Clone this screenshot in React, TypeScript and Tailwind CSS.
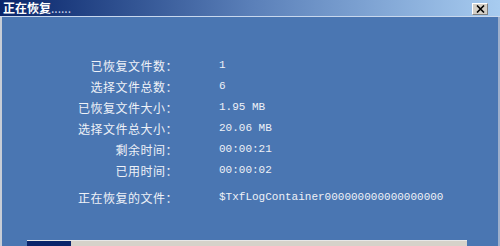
const rows: [string, string][] = [
  ['已恢复文件数：', '1'],
  ['选择文件总数：', '6'],
  ['已恢复文件大小：', '1.95 MB'],
  ['选择文件总大小：', '20.06 MB'],
  ['剩余时间：', '00:00:21'],
  ['已用时间：', '00:00:02'],
];

function Row({ label, value, className = '' }: { label: string; value: string; className?: string }) {
  return (
    <div className={`flex h-[21px] items-center ${className}`}>
      <div className="w-[176px] text-right text-[12px] tracking-[0.5px] text-[#eef1f7] [font-family:'Noto_Sans_CJK_SC',sans-serif]">
        {label}
      </div>
      <div className="ml-[41px] text-[11px] text-[#eef1f7] [font-family:'Liberation_Mono',monospace]">{value}</div>
    </div>
  );
}

export default function App() {
  return (
    <div className="flex h-[246px] w-[500px] flex-col overflow-hidden bg-[#4a76b2]">
      <div className="flex h-[16px] items-center justify-between bg-gradient-to-r from-[#0a246a] via-[#5a7fb8] to-[#a8ccf0] pl-[3px] pr-[12px]">
        <span className="text-[12px] font-bold leading-none text-white [font-family:'Noto_Sans_CJK_SC',sans-serif]">
          正在恢复<span className="font-normal text-[#c8d4ec]">......</span>
        </span>
        <div className="mt-[2px] flex h-[12px] w-[16px] items-center justify-center border border-[#808080] bg-[#d4d0c8] border-t-white border-l-white">
          <svg width="9" height="8" viewBox="0 0 9 8">
            <path d="M1 0.5 L8 7.5 M8 0.5 L1 7.5" stroke="#000" strokeWidth="1.6" />
          </svg>
        </div>
      </div>
      <div className="h-[1px] bg-[#c8d8ee]" />
      <div className="flex flex-1 flex-col border-x-2 border-l-[#c8cdd6] border-r-[#9fb0cc] pt-[38px]">
        {rows.map(([l, v]) => (
          <Row key={l} label={l} value={v} />
        ))}
        <Row className="mt-[6px]" label="正在恢复的文件：" value="$TxfLogContainer000000000000000000" />
        <div className="mt-auto ml-[25px] flex h-[6px] w-[440px] border-t border-[#e8e8e8] bg-[#d6d2ca]">
          <div className="w-[44px] bg-[#0a246a]" />
        </div>
      </div>
    </div>
  );
}
